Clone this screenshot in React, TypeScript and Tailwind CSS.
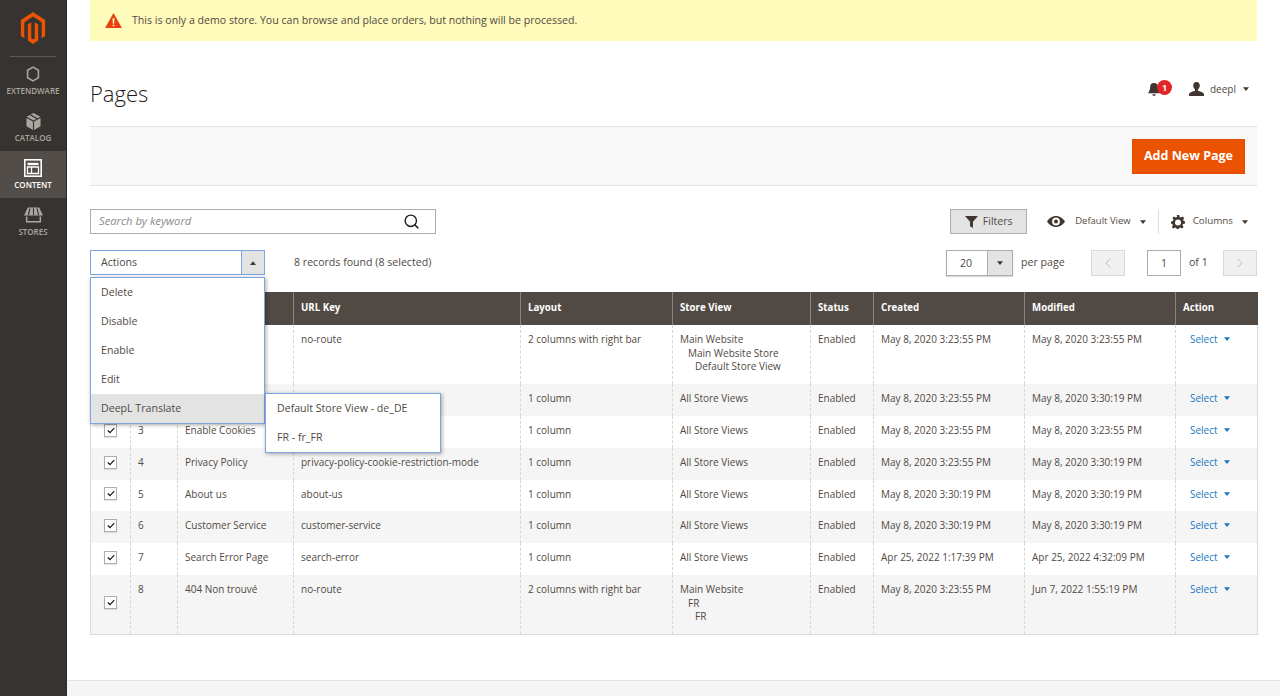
import { ChevronLeft, ChevronRight, Search } from 'lucide-react';

const font = { fontFamily: '"Open Sans", sans-serif' };

type Row = {
  id: number;
  title: string;
  url: string;
  layout: string;
  view: string[];
  status: string;
  created: string;
  modified: string;
  height: string;
  covered?: boolean;
};

// the open Actions menu sits over the first rows, so their hidden cells stay empty
const rows: Row[] = [
  { id: 1, title: '', url: 'no-route', layout: '2 columns with right bar', view: ['Main Website', 'Main Website Store', 'Default Store View'], status: 'Enabled', created: 'May 8, 2020 3:23:55 PM', modified: 'May 8, 2020 3:23:55 PM', height: 'h-[59px]', covered: true },
  { id: 2, title: '', url: '', layout: '1 column', view: ['All Store Views'], status: 'Enabled', created: 'May 8, 2020 3:23:55 PM', modified: 'May 8, 2020 3:30:19 PM', height: 'h-[32px]', covered: true },
  { id: 3, title: 'Enable Cookies', url: '', layout: '1 column', view: ['All Store Views'], status: 'Enabled', created: 'May 8, 2020 3:23:55 PM', modified: 'May 8, 2020 3:23:55 PM', height: 'h-[32px]' },
  { id: 4, title: 'Privacy Policy', url: 'privacy-policy-cookie-restriction-mode', layout: '1 column', view: ['All Store Views'], status: 'Enabled', created: 'May 8, 2020 3:23:55 PM', modified: 'May 8, 2020 3:30:19 PM', height: 'h-[32px]' },
  { id: 5, title: 'About us', url: 'about-us', layout: '1 column', view: ['All Store Views'], status: 'Enabled', created: 'May 8, 2020 3:30:19 PM', modified: 'May 8, 2020 3:30:19 PM', height: 'h-[31px]' },
  { id: 6, title: 'Customer Service', url: 'customer-service', layout: '1 column', view: ['All Store Views'], status: 'Enabled', created: 'May 8, 2020 3:30:19 PM', modified: 'May 8, 2020 3:30:19 PM', height: 'h-[32px]' },
  { id: 7, title: 'Search Error Page', url: 'search-error', layout: '1 column', view: ['All Store Views'], status: 'Enabled', created: 'Apr 25, 2022 1:17:39 PM', modified: 'Apr 25, 2022 4:32:09 PM', height: 'h-[32px]' },
  { id: 8, title: '404 Non trouvé', url: 'no-route', layout: '2 columns with right bar', view: ['Main Website', 'FR', 'FR'], status: 'Enabled', created: 'May 8, 2020 3:23:55 PM', modified: 'Jun 7, 2022 1:55:19 PM', height: 'h-[59px]' },
];

const headers = ['', '', '', 'URL Key', 'Layout', 'Store View', 'Status', 'Created', 'Modified', 'Action'];
const widths = ['w-[40px]', 'w-[47px]', 'w-[116px]', 'w-[227px]', 'w-[152px]', 'w-[138px]', 'w-[63px]', 'w-[151px]', 'w-[151px]', 'w-[82px]'];

function Caret({ className }: { className?: string }) {
  return (
    <svg viewBox="0 0 8 5" className={className ?? 'w-[7px] h-[4px]'} fill="currentColor">
      <path d="M0 0h8L4 5z" />
    </svg>
  );
}

function NavItem({ label, active, children }: { label: string; active?: boolean; children: React.ReactNode }) {
  return (
    <div className={`h-[47px] flex flex-col items-center justify-center ${active ? 'bg-[#524d49] text-white' : 'text-[#aaa6a0]'}`}>
      <div className="h-[20px] flex items-center">{children}</div>
      <span className="text-[8px] font-semibold leading-[12px] mt-[1px]">{label}</span>
    </div>
  );
}

function Sidebar() {
  return (
    <aside className="w-[67px] shrink-0 bg-[#373330] border-r border-[#2e2b28] flex flex-col">
      <div className="h-[57px] px-[10px]">
        <div className="h-[57px] border-b border-[#5c5854] flex items-center justify-center">
          <svg viewBox="0 0 24 24" className="w-[28px] h-[32px] text-[#eb5202] -mt-[1px]" fill="currentColor" preserveAspectRatio="none">
            <path d="M12 24l-4.455-2.572v-12l2.97-1.715v12.001l1.485.902 1.485-.902V7.713l2.97 1.715v12L12 24zM22.391 6v12l-2.971 1.715V7.713L12 3.43 4.574 7.713v12L1.609 18V6L12 0l10.391 6z" />
          </svg>
        </div>
      </div>
      <NavItem label="EXTENDWARE">
        <svg viewBox="0 0 16 18" className="w-[14px] h-[16px]" fill="none" stroke="currentColor" strokeWidth="1.8">
          <path d="M8 1.2l6.2 3.6v8.4L8 16.8l-6.2-3.6V4.8z" />
        </svg>
      </NavItem>
      <NavItem label="CATALOG">
        <svg viewBox="0 0 16 18" className="w-[15px] h-[17px]" fill="currentColor">
          <path d="M8 0l7.2 4L8 8 .8 4zM.5 5.2L7.4 9v9L.5 14zM15.500 5.200L8.600 9v9l6.900-4z" />
          <path d="M4 2.200l7.200 4 1.400-.8-7.200-4z" fill="#373330" />
        </svg>
      </NavItem>
      <NavItem label="CONTENT" active>
        <svg viewBox="0 0 18 18" className="w-[18px] h-[18px]" fill="none" stroke="currentColor">
          <rect x="0.8" y="0.8" width="16.4" height="16.4" strokeWidth="1.6" />
          <path d="M3.500 5h11" strokeWidth="2.4" />
          <path d="M3.500 8h11v6.500h-11zM7.500 8v6.500" strokeWidth="1.3" />
        </svg>
      </NavItem>
      <NavItem label="STORES">
        <svg viewBox="0 0 20 16" className="w-[19px] h-[16px]" fill="currentColor">
          <path d="M4 0h12l4 8.500H0z" />
          <path d="M6.300 1l-1.700 7M10 1v7M13.700 1l1.700 7" stroke="#373330" strokeWidth="1.2" />
          <path d="M2 9.500h1.600v4.900h12.800V9.500H18V16H2z" />
        </svg>
      </NavItem>
    </aside>
  );
}

function Toolbar() {
  return (
    <div className="flex items-start justify-between">
      <div className="w-[346px] h-[25px] border border-[#adadad] flex items-center justify-between pl-[8px] pr-[15px]">
        <span className="italic text-[11.2px] text-[#8a8a8a]">Search by keyword</span>
        <Search className="w-[17px] h-[17px] text-[#1f1c1a]" strokeWidth={2} />
      </div>
      <div className="flex items-center text-[#514943] h-[25px]">
        <div className="w-[77px] h-[25px] bg-[#e3e3e3] border border-[#adadad] flex items-center justify-center gap-[5px] text-[10.5px]">
          <svg viewBox="0 0 14 13" className="w-[13px] h-[12px] text-[#41362f]" fill="currentColor">
            <path d="M0 0h14L8.600 6.200V13l-3.200-2V6.200z" />
          </svg>
          Filters
        </div>
        <svg viewBox="0 0 18 11" className="w-[18px] h-[11px] ml-[20px] text-[#41362f]" fill="currentColor">
          <path fillRule="evenodd" d="M9 0c4 0 7.300 2.600 9 5.500C16.300 8.400 13 11 9 11S1.700 8.400 0 5.500C1.700 2.600 5 0 9 0zm0 1.600a3.900 3.900 0 100 7.800 3.900 3.900 0 000-7.800zM9 3.500a2 2 0 110 4 2 2 0 010-4z" />
        </svg>
        <span className="text-[9.500px] ml-[10px]">Default View</span>
        <Caret className="w-[6px] h-[4px] ml-[9px] text-[#41362f]" />
        <div className="w-px h-[25px] bg-[#ddd] ml-[12px]" />
        <svg viewBox="0 0 14 14" className="w-[14px] h-[14px] ml-[12px] text-[#41362f]" fill="currentColor">
          <path fillRule="evenodd" d="M5.800 0h2.400l.4 1.900 1.300.6L11.600 1.400l1.600 1.600-1.100 1.700.6 1.300L14 6.400v2.200l-1.900.4-.6 1.300 1.100 1.700-1.600 1.600-1.700-1.100-1.300.6-.4 1.900H5.800l-.4-1.900-1.300-.6-1.700 1.100L.8 12l1.100-1.700L1.300 9 0 8.600V6.400l1.900-.4.6-1.300L1.400 3 3 1.400l1.700 1.100 1.300-.6zM7 4.500a3 3 0 100 6 3 3 0 000-6z" />
        </svg>
        <span className="text-[9.800px] ml-[8px]">Columns</span>
        <Caret className="w-[6px] h-[4px] ml-[9px] mr-[9px] text-[#41362f]" />
      </div>
    </div>
  );
}

function ActionsRow() {
  return (
    <div className="flex items-start justify-between mt-[16px] h-[26px]">
      <div className="flex items-center h-[25px]">
        <div className="relative w-[175px] h-[25px] border border-[#7ba4e0] flex">
          <span className="flex-1 pl-[10px] text-[10.6px] leading-[23px] text-[#514943]">Actions</span>
          <span className="w-[23px] bg-[#e3e3e3] border-l border-[#7ba4e0] flex items-center justify-center text-[#41362f]">
            <Caret className="w-[6px] h-[4px] rotate-180" />
          </span>
          <div className="absolute z-20 left-[-1px] top-[26px] w-[175px] bg-white border border-[#7ba4e0] shadow-[1px_1px_4px_rgba(0,0,0,0.35)] text-[10.6px] text-[#514943]">
            {['Delete', 'Disable', 'Enable', 'Edit'].map((item) => (
              <div key={item} className="h-[29px] leading-[29px] pl-[10px]">{item}</div>
            ))}
            <div className="relative h-[29px] leading-[29px] pl-[10px] bg-[#e3e3e3]">
              DeepL Translate
              <div className="absolute left-[174px] -top-[1px] w-[176px] bg-white border border-[#7ba4e0] shadow-[1px_1px_4px_rgba(0,0,0,0.35)]">
                <div className="h-[29px] leading-[29px] pl-[11px]">Default Store View - de_DE</div>
                <div className="h-[29px] leading-[29px] pl-[11px]">FR - fr_FR</div>
              </div>
            </div>
          </div>
        </div>
        <span className="ml-[29px] text-[10.6px] text-[#514943]">8 records found (8 selected)</span>
      </div>
      <div className="flex items-center text-[#514943] text-[10.6px]">
        <div className="w-[67px] h-[26px] border border-[#adadad] flex shadow-[0_1px_1px_rgba(0,0,0,0.15)]">
          <span className="flex-1 text-center leading-[24px] pr-[2px]">20</span>
          <span className="w-[25px] bg-[#e3e3e3] border-l border-[#adadad] flex items-center justify-center text-[#41362f]">
            <Caret className="w-[6px] h-[4px]" />
          </span>
        </div>
        <span className="ml-[8px] w-[44px]">per page</span>
        <div className="ml-[26px] w-[34px] h-[26px] bg-[#f0f0f0] border border-[#d9d9d9] flex items-center justify-center">
          <ChevronLeft className="w-[16px] h-[16px] text-[#b5b5b5]" strokeWidth={1.3} />
        </div>
        <div className="ml-[22px] w-[34px] h-[26px] border border-[#adadad] text-center leading-[24px]">1</div>
        <span className="ml-[8px] w-[19px]">of 1</span>
        <div className="ml-[15px] w-[34px] h-[26px] bg-[#f0f0f0] border border-[#d9d9d9] flex items-center justify-center">
          <ChevronRight className="w-[16px] h-[16px] text-[#b5b5b5]" strokeWidth={1.3} />
        </div>
      </div>
    </div>
  );
}

function Check() {
  return (
    <div className="w-[13px] h-[13px] mb-[4px] border border-[#adadad] bg-white flex items-center justify-center mx-auto shadow-[0_1px_1px_rgba(0,0,0,0.1)]">
      <svg viewBox="0 0 10 8" className="w-[8px] h-[7px] text-[#1f1c1a]" fill="none" stroke="currentColor" strokeWidth="1.6">
        <path d="M1 4l2.800 2.600L9 1" />
      </svg>
    </div>
  );
}

function PagesTable() {
  return (
    <table className="mt-[16px] w-[1167px] table-fixed border-collapse text-[10px] text-[#514943]">
      <colgroup>
        {widths.map((w, i) => (
          <col key={i} className={w} />
        ))}
      </colgroup>
      <thead>
        <tr className="h-[33px] bg-[#514943] text-white">
          {headers.map((h, i) => (
            <th key={h + i} className={`text-left font-bold text-[9.700px] px-[7px] ${i > 0 ? 'border-l border-[#8a837e]' : ''}`}>
              {h}
            </th>
          ))}
        </tr>
      </thead>
      <tbody className="border-x border-b border-[#d9d9d9]">
        {rows.map((r, i) => {
          const cell = `align-top pt-[8px] pb-0 px-[7px] leading-[13.500px] border-l border-dashed border-[#d6d6d6]`;
          return (
            <tr key={r.id} className={`${r.height} ${i % 2 ? 'bg-[#f5f5f5]' : 'bg-white'}`}>
              <td className="align-middle">{!r.covered && <Check />}</td>
              <td className={cell}>{!r.covered && r.id}</td>
              <td className={cell}>{r.title}</td>
              <td className={cell}>{r.url}</td>
              <td className={cell}>{r.layout}</td>
              <td className={cell}>
                {r.view.map((v, j) => (
                  <div key={j} className={j === 1 ? 'pl-[8px]' : j === 2 ? 'pl-[15px]' : ''}>{v}</div>
                ))}
              </td>
              <td className={cell}>{r.status}</td>
              <td className={cell}>{r.created}</td>
              <td className={cell}>{r.modified}</td>
              <td className={cell}>
                <span className="flex items-center gap-[6px] pl-[7px] text-[#1979c3]">
                  Select
                  <Caret className="w-[6px] h-[4px] -mt-[2px]" />
                </span>
              </td>
            </tr>
          );
        })}
      </tbody>
    </table>
  );
}

export default function App() {
  return (
    <div className="flex w-[1280px] h-[696px] overflow-hidden bg-white" style={font}>
      <Sidebar />
      <main className="flex-1 min-w-0 flex flex-col">
        <div className="pl-[23px] pr-[23px]">
          <div className="h-[41px] bg-[#fffbbb] flex items-center pl-[15px] text-[10.6px] text-[#514943]">
            <svg viewBox="0 0 18 16" className="w-[17px] h-[15px] shrink-0" fill="currentColor">
              <path fillRule="evenodd" d="M9 0l9 16H0zM8 5.500l.3 6h1.400l.3-6zM8.100 12.400v1.800h1.800v-1.800z" fill="#e8410f" />
            </svg>
            <span className="ml-[10px]">This is only a demo store. You can browse and place orders, but nothing will be processed.</span>
          </div>
          <div className="h-[85px] flex items-start justify-between">
            <h1 className="mt-[37px] text-[22px] leading-[30px] font-light text-[#1f1c1a]">Pages</h1>
            <div className="mt-[40px] flex items-center text-[#514943]">
              <div className="relative w-[24px] h-[16px]">
                <svg viewBox="0 0 14 15" className="absolute left-0 top-[2px] w-[12px] h-[13px] text-[#41362f]" fill="currentColor">
                  <path d="M7 0a4.500 4.500 0 014.500 4.500c0 4 1.500 5.500 2.500 7.500H0c1-2 2.500-3.500 2.500-7.500A4.500 4.500 0 017 0zM5 13h4a2 2 0 01-4 0z" />
                </svg>
                <span className="absolute left-[9px] -top-[1px] w-[15px] h-[15px] rounded-full bg-[#e22626] text-white text-[9px] font-bold flex items-center justify-center">1</span>
              </div>
              <svg viewBox="0 0 16 15" className="ml-[17px] w-[15px] h-[14px] text-[#41362f]" fill="currentColor">
                <path d="M8 0c2.300 0 3.500 1.600 3.500 3.800 0 1.800-.9 3.400-1.900 4.200v1.300c2.500.8 5.400 1.500 6.400 3.200V15H0v-2.500c1-1.700 3.900-2.400 6.400-3.200V8C5.400 7.200 4.500 5.600 4.500 3.800 4.500 1.600 5.700 0 8 0z" />
              </svg>
              <span className="ml-[6px] text-[10px]">deepl</span>
              <Caret className="w-[6px] h-[4px] ml-[7px] mr-[8px] text-[#41362f]" />
            </div>
          </div>
          <div className="h-[60px] bg-[#f8f8f8] border-y border-[#e5e5e5] flex items-center justify-end pr-[12px]">
            <div className="w-[113px] h-[35px] bg-[#eb5202] border border-[#e04f00] text-white text-[12.5px] font-bold flex items-center justify-center">
              Add New Page
            </div>
          </div>
          <div className="pt-[23px]">
            <Toolbar />
            <ActionsRow />
            <PagesTable />
          </div>
        </div>
        <div className="mt-auto h-[16px] bg-[#f5f5f5] border-t border-[#e3e3e3]" />
      </main>
    </div>
  );
}
